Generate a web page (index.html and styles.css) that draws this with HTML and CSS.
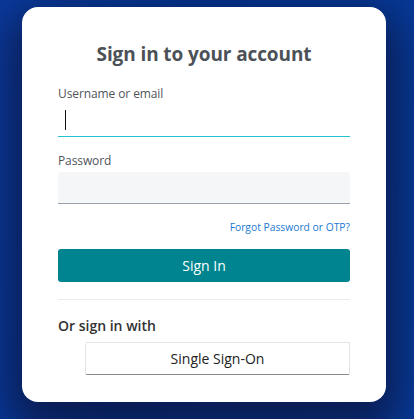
FILE: index.html
```html
<!DOCTYPE html>
<html lang="en">
<head>
<meta charset="utf-8">
<title>Sign in</title>
<link rel="stylesheet" href="styles.css">
</head>
<body>
<div class="page">
  <div class="card">
    <h1 class="title">Sign in to your account</h1>
    <div class="field">
      <label class="label">Username or email</label>
      <div class="input input-focus"><span class="caret"></span></div>
    </div>
    <div class="field field-pw">
      <label class="label">Password</label>
      <div class="input input-pw"></div>
    </div>
    <div class="forgot-row"><a class="forgot" href="#">Forgot Password or OTP?</a></div>
    <button class="btn-primary">Sign In</button>
    <hr class="divider">
    <div class="alt-label">Or sign in with</div>
    <div class="sso-row"><button class="btn-sso">Single Sign-On</button></div>
  </div>
</div>
</body>
</html>
```
FILE: styles.css
```css
* { box-sizing: border-box; }
html, body { margin: 0; padding: 0; }
body {
  width: 414px;
  height: 419px;
  overflow: hidden;
  font-family: "Open Sans", "Noto Sans", sans-serif;
  background: linear-gradient(100deg, #0a3a9c 0%, #023592 40%, #073a97 100%);
}
.page {
  padding: 7px 0 0 22px;
}
.card {
  width: 364px;
  height: 395px;
  background: #fff;
  border-radius: 16px;
  padding: 33px 36px 0;
  box-shadow: 0 18px 40px 12px rgba(14, 20, 60, 0.75);
}
.title {
  margin: 0;
  text-align: center;
  font-size: 19px;
  line-height: 28px;
  font-weight: 700;
  color: #4b5157;
  letter-spacing: -0.1px;
}
.field { margin-top: 17px; }
.field-pw { margin-top: 15px; }
.label {
  display: block;
  font-size: 12px;
  line-height: 18px;
  color: #505459;
  letter-spacing: -0.1px;
}
.input {
  height: 32px;
  margin-top: 1px;
  display: flex;
  align-items: center;
  padding-left: 7px;
}
.input-focus {
  margin-top: 2px;
  border-bottom: 1px solid #22c3cf;
}
.input-pw {
  margin-top: 2px;
  background: #f5f6f8;
  border-radius: 3px 3px 0 0;
  border-bottom: 1px solid #9aa1ae;
}
.caret {
  display: block;
  width: 1px;
  height: 20px;
  background: #111;
  margin-top: -2px;
}
.forgot-row {
  margin-top: 14px;
  text-align: right;
  line-height: 14px;
}
.forgot {
  font-size: 10.3px;
  color: #2279d2;
  text-decoration: none;
}
.btn-primary {
  display: block;
  width: 100%;
  height: 33px;
  margin-top: 15px;
  border: 0;
  border-radius: 3px;
  background: #008590;
  color: #fff;
  font-family: inherit;
  font-size: 14px;
}
.divider {
  margin: 17px 0 0;
  border: 0;
  border-top: 1px solid #ececec;
}
.alt-label {
  margin-top: 17px;
  font-size: 14px;
  line-height: 18px;
  font-weight: 600;
  color: #323232;
}
.sso-row {
  margin-top: 7px;
  padding-left: 27px;
}
.btn-sso {
  display: block;
  width: 100%;
  height: 33px;
  background: #fff;
  border: 1px solid #e3e3e3;
  border-bottom: 1px solid #8a8a8a;
  border-radius: 2px;
  font-family: inherit;
  font-size: 14px;
  color: #222;
}
```
